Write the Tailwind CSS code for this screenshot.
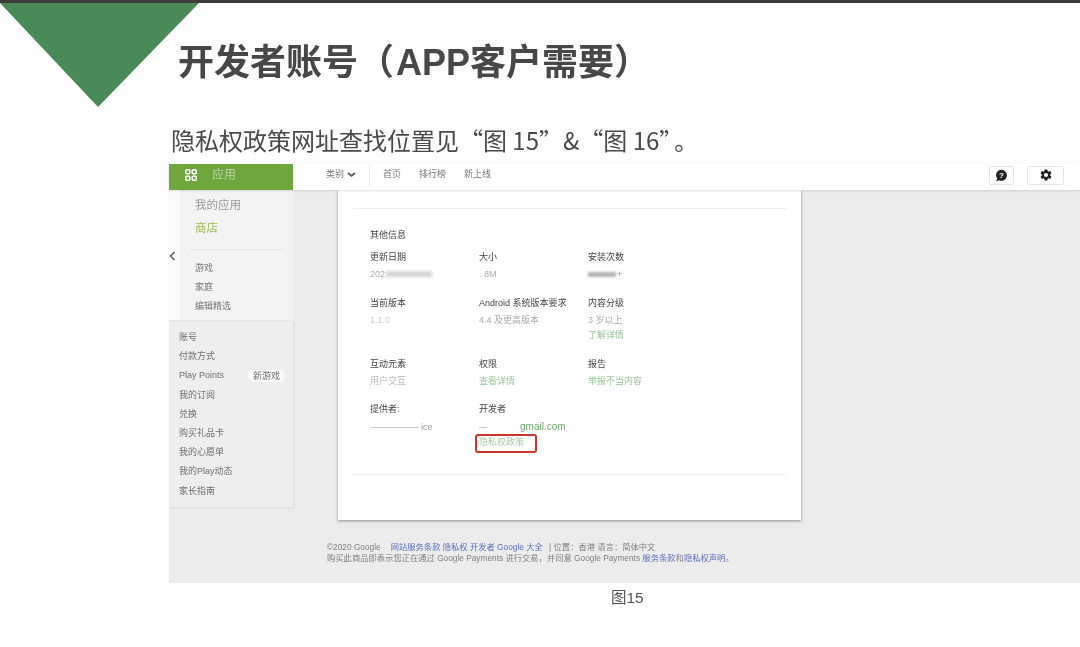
<!DOCTYPE html>
<html lang="zh-CN">
<head>
    <meta charset="UTF-8">
    <meta name="viewport" content="width=device-width, initial-scale=1.0">
    <title>开发者账号</title>
    <script src="https://cdn.jsdelivr.net/npm/@tailwindcss/browser@4"></script>
</head>
<body class="bg-[#fdfdfd]">
<div class="relative w-[1080px] h-[647px] overflow-hidden font-['Liberation_Sans','Noto_Sans_CJK_SC',sans-serif] text-[#666]">
    <div class="h-[3px] bg-[#3c3c3c]"></div>

    <!-- corner triangle -->
    <svg class="absolute left-0 top-[3px]" width="200" height="105" viewBox="0 0 200 105"><polygon points="0,0 199,0 98,104" fill="#4a8a58"/></svg>

    <h1 class="relative pl-[178px] pt-[36px] h-[95px] text-[36px] leading-[48px] font-bold text-[#474747] blur-[0.4px]">开发者账号（<span class="pl-[2px]">APP</span>客户需要）</h1>
    <p class="pl-[171px] pt-[26px] h-[66px] font-['Noto_Sans_CJK_SC',sans-serif] text-[24px] leading-[32px] text-[#4a4a4a] blur-[0.3px]">隐私权政策网址查找位置见“图 15”&amp;“图 16”<span class="pl-[3px]">。</span></p>

    <!-- screenshot -->
    <div class="ml-[169px] h-[419px] flex flex-col bg-[#ececec] blur-[0.5px]">
        <!-- top nav -->
        <div class="h-[26px] shrink-0 flex items-center bg-white shadow-[0_1px_2px_rgba(0,0,0,0.12)] relative z-10">
            <div class="w-[124px] h-full flex items-center pl-[16px] pb-[4px] gap-[15px] bg-[#6fa63e] text-white/50 text-[12px]">
                <svg width="12" height="12" viewBox="0 0 12 12" fill="none" stroke="#fff" stroke-width="1.5"><rect x="0.8" y="0.8" width="4" height="4" rx="1"/><rect x="7.2" y="0.8" width="4" height="4" rx="1"/><rect x="0.8" y="7.2" width="4" height="4" rx="1"/><rect x="7.2" y="7.2" width="4" height="4" rx="1"/></svg>
                <span>应用</span>
            </div>
            <div class="flex items-center pl-[33px] pb-[4px] gap-[3px] text-[9px] text-[#777]">
                <span>类别</span>
                <svg width="9" height="6" viewBox="0 0 9 6" fill="none" stroke="#555" stroke-width="1.7"><path d="M1 1l3.5 3 3.5-3"/></svg>
            </div>
            <div class="w-px h-[21px] bg-[#e8e8e8] ml-[13px] mb-[4px]"></div>
            <div class="flex gap-[18px] pl-[13px] pb-[4px] text-[9px] text-[#777]">
                <span>首页</span><span>排行榜</span><span>新上线</span>
            </div>
            <div class="ml-auto flex gap-[13px] pr-[16px] pb-[4px]">
                <div class="w-[25px] h-[19px] flex items-center justify-center rounded-[2px] border border-[#e4e4e4] bg-white">
                    <svg width="13" height="13" viewBox="0 0 12 12"><path d="M6 .8a5 5 0 1 1-2.2 9.5L1.2 11.2l.8-2.4A5 5 0 0 1 6 .8z" fill="#222"/><text x="6" y="8.6" text-anchor="middle" font-size="7.5" font-weight="700" fill="#fff" font-family="Liberation Sans">?</text></svg>
                </div>
                <div class="w-[37px] h-[19px] flex items-center justify-center rounded-[2px] border border-[#e4e4e4] bg-white">
                    <svg width="14" height="14" viewBox="0 0 24 24"><path fill="#222" d="M19.14 12.94c.04-.3.06-.61.06-.94s-.02-.64-.07-.94l2.03-1.58a.49.49 0 0 0 .12-.61l-1.92-3.32a.49.49 0 0 0-.59-.22l-2.39.96a7 7 0 0 0-1.62-.94l-.36-2.54a.48.48 0 0 0-.48-.41h-3.84a.48.48 0 0 0-.47.41l-.36 2.54c-.59.24-1.13.57-1.62.94l-2.39-.96a.48.48 0 0 0-.59.22L2.74 8.87a.48.48 0 0 0 .12.61l2.03 1.58c-.05.3-.09.63-.09.94s.02.64.07.94l-2.03 1.58a.49.49 0 0 0-.12.61l1.92 3.32c.12.22.37.29.59.22l2.39-.96c.5.38 1.03.7 1.62.94l.36 2.54c.05.24.24.41.48.41h3.84c.24 0 .44-.17.47-.41l.36-2.54c.59-.24 1.13-.56 1.62-.94l2.39.96c.22.08.47 0 .59-.22l1.92-3.32a.48.48 0 0 0-.12-.61zM12 15.6a3.6 3.6 0 1 1 0-7.2 3.6 3.6 0 0 1 0 7.2z"/></svg>
                </div>
            </div>
        </div>

        <div class="flex flex-1 min-h-0">
            <!-- sidebar -->
            <div class="w-[124px] shrink-0 self-start">
                <div class="flex h-[130px] bg-[#fbfbfb]">
                    <div class="w-[11px] flex items-start justify-start pt-[61px]">
                        <svg width="7" height="10" viewBox="0 0 7 10" fill="none" stroke="#555" stroke-width="1.4"><path d="M5.5 1L1.5 5l4 4"/></svg>
                    </div>
                    <div class="flex-1 bg-[#f3f3f3] pl-[15px] pr-[9px] pt-[6px]">
                        <div class="h-[19px] leading-[19px] text-[11.5px] text-[#999]">我的应用</div>
                        <div class="h-[19px] mt-[4px] leading-[19px] text-[11.5px] text-[#9dbb55]">商店</div>
                        <div class="h-px mt-[11px] -ml-[5px] bg-[#e6e6e6]"></div>
                        <div class="mt-[9px] h-[19px] leading-[19px] text-[9px] text-[#777]">游戏</div>
                        <div class="h-[19px] leading-[19px] text-[9px] text-[#777]">家庭</div>
                        <div class="h-[19px] leading-[19px] text-[9px] text-[#777]">编辑精选</div>
                    </div>
                </div>
                <div class="h-[187px] pl-[10px] pr-[8px] pt-[7px] bg-[#eeeeee] border-t border-[#e6e6e6] shadow-[1px_1px_2px_rgba(0,0,0,0.08)] text-[9px] text-[#707070]">
                    <div class="h-[19.2px] leading-[19px]">账号</div>
                    <div class="h-[19.2px] leading-[19px]">付款方式</div>
                    <div class="h-[19.2px] leading-[19px] flex items-center justify-between">
                        <span>Play Points</span>
                        <span class="px-[5px] h-[12px] leading-[12px] rounded-full bg-[#fafafa]">新游戏</span>
                    </div>
                    <div class="h-[19.2px] leading-[19px]">我的订阅</div>
                    <div class="h-[19.2px] leading-[19px]">兑换</div>
                    <div class="h-[19.2px] leading-[19px]">购买礼品卡</div>
                    <div class="h-[19.2px] leading-[19px]">我的心愿单</div>
                    <div class="h-[19.2px] leading-[19px]">我的Play动态</div>
                    <div class="h-[19.2px] leading-[19px]">家长指南</div>
                </div>
            </div>

            <!-- main column -->
            <div class="flex-1 min-w-0 pl-[45px]">
                <div class="w-[463px] h-[330px] bg-white shadow-[0_1px_3px_rgba(0,0,0,0.4)] text-[9px] pt-[18px]">
                    <div class="h-px mx-[15px] bg-[#eeeeee]"></div>
                    <div class="pl-[32px] pt-[18px]">
                        <div class="h-[17px] leading-[17px] text-[#444]">其他信息</div>
                        <div class="grid grid-cols-[109px_109px_109px] mt-[5px] text-[#444]">
                            <div>
                                <div class="h-[17px] leading-[17px]">更新日期</div>
                                <div class="h-[16px] leading-[16px] flex items-center text-[#aaa]"><span>202</span><span class="w-[46px] h-[6px] ml-[1px] bg-[#d4d4d4] blur-[1.5px]"></span></div>
                            </div>
                            <div>
                                <div class="h-[17px] leading-[17px]">大小</div>
                                <div class="h-[16px] leading-[16px] text-[#aaa]">. 8M</div>
                            </div>
                            <div>
                                <div class="h-[17px] leading-[17px]">安装次数</div>
                                <div class="h-[16px] leading-[16px] flex items-center text-[#999]"><span class="w-[28px] h-[5px] bg-[#b5b5b5] blur-[1px]"></span><span class="ml-[1px]">+</span></div>
                            </div>
                        </div>
                        <div class="grid grid-cols-[109px_109px_109px] mt-[13px] text-[#444]">
                            <div>
                                <div class="h-[17px] leading-[17px]">当前版本</div>
                                <div class="h-[16px] leading-[16px] text-[#ccc]">1.1.0</div>
                            </div>
                            <div>
                                <div class="h-[17px] leading-[17px]">Android 系统版本要求</div>
                                <div class="h-[16px] leading-[16px] text-[#aaa]">4.4 及更高版本</div>
                            </div>
                            <div>
                                <div class="h-[17px] leading-[17px]">内容分级</div>
                                <div class="h-[16px] leading-[16px] text-[#aaa]">3 岁以上</div>
                                <div class="h-[15px] leading-[15px] text-[#9cc49c]">了解详情</div>
                            </div>
                        </div>
                        <div class="grid grid-cols-[109px_109px_109px] mt-[13px] text-[#444]">
                            <div>
                                <div class="h-[17px] leading-[17px]">互动元素</div>
                                <div class="h-[16px] leading-[16px] text-[#bbb]">用户交互</div>
                            </div>
                            <div>
                                <div class="h-[17px] leading-[17px]">权限</div>
                                <div class="h-[16px] leading-[16px] text-[#9cc49c]">查看详情</div>
                            </div>
                            <div>
                                <div class="h-[17px] leading-[17px]">报告</div>
                                <div class="h-[16px] leading-[16px] text-[#9cc49c]">举报不当内容</div>
                            </div>
                        </div>
                        <div class="grid grid-cols-[109px_109px_109px] mt-[12px] text-[#444]">
                            <div>
                                <div class="h-[17px] leading-[17px]">提供者:</div>
                                <div class="h-[17px] pt-[1px] leading-[16px] flex items-center text-[#999]"><span class="w-[49px] h-px bg-[#ccc]"></span><span class="ml-[2px]">ice</span></div>
                            </div>
                            <div class="relative">
                                <div class="h-[17px] leading-[17px]">开发者</div>
                                <div class="h-[17px] pt-[1px] leading-[16px] flex items-center text-[10px] text-[#6fa86f]"><span class="w-[8px] h-px bg-[#ccc]"></span><span class="ml-[33px]">gmail.com</span></div>
                                <div class="h-[15px] leading-[15px] text-[#a6c9a6]">隐私权政策</div>
                                <div class="absolute -left-[4px] top-[33px] w-[62px] h-[19px] rounded-[3px] border-2 border-[#c8372d]"></div>
                            </div>
                            <div></div>
                        </div>
                    </div>
                    <div class="h-px mx-[15px] mt-[24px] bg-[#eeeeee]"></div>
                </div>

                <!-- footer -->
                <div class="mt-[22px] -ml-[11px] text-[8.3px] leading-[11px] text-[#808080]">
                    <div class="flex">
                        <span class="mr-[10px]">©2020 Google</span>
                        <span class="text-[#5a6fc0]">网站服务条款 隐私权 开发者 Google 大全</span>
                        <span class="ml-[4px]">&nbsp;| 位置：香港 语言：简体中文</span>
                    </div>
                    <div>购买此商品即表示您正在通过 Google Payments 进行交易，并同意 Google Payments <span class="text-[#5a6fc0]">服务条款</span>和<span class="text-[#5a6fc0]">隐私权声明</span>。</div>
                </div>
            </div>
        </div>
    </div>

    <p class="pl-[611px] pt-[5px] text-[15.5px] leading-[20px] text-[#555] blur-[0.3px]">图15</p>
</div>
</body>
</html>
